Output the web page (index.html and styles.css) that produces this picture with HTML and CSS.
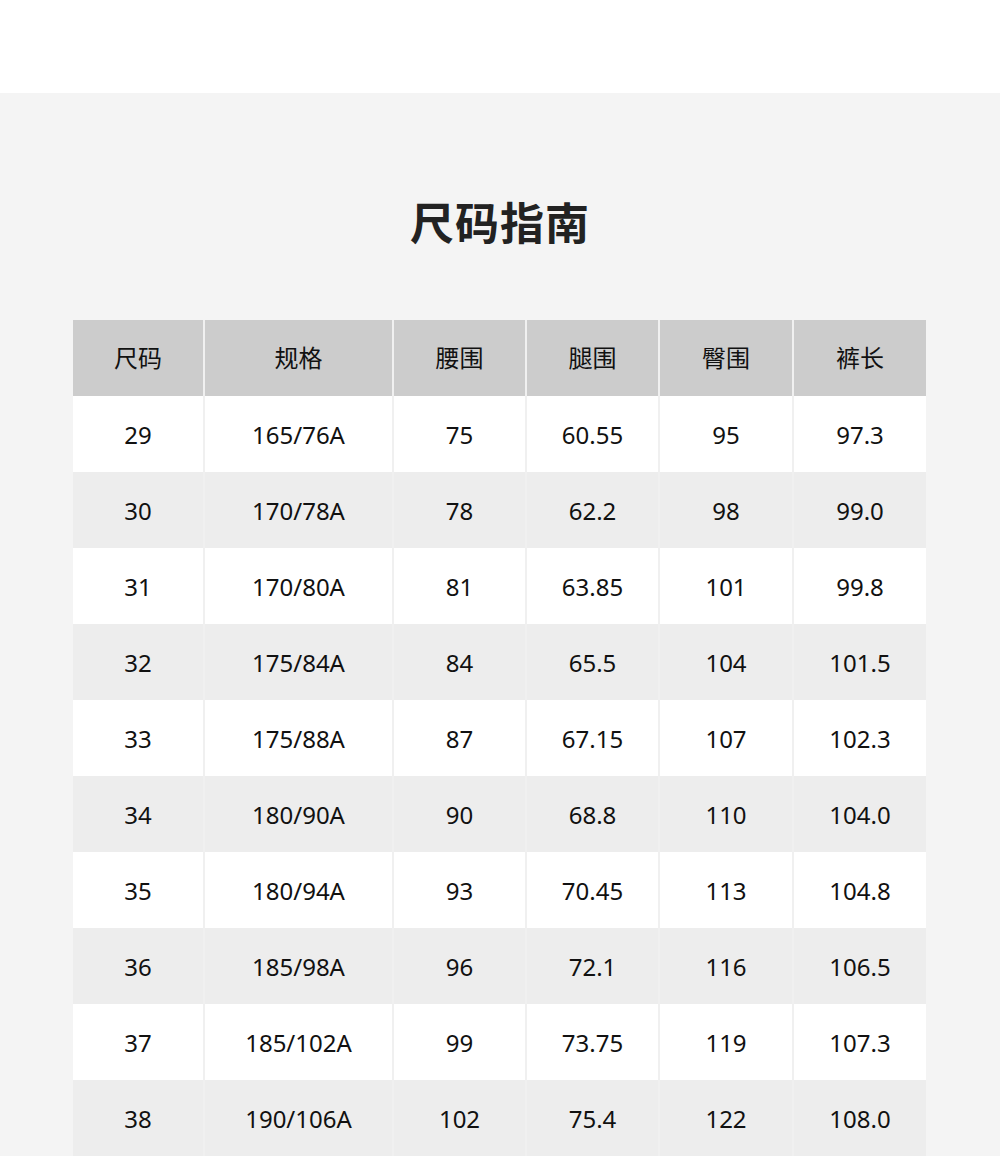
FILE: index.html
```html
<!DOCTYPE html>
<html lang="zh">
<head>
<meta charset="utf-8">
<link rel="stylesheet" href="styles.css">
</head>
<body>
<div class="topband"></div>
<section class="guide">
  <h1 class="title">尺码指南</h1>
  <div class="size-table">
    <div class="cell head">尺码</div><div class="cell head">规格</div><div class="cell head">腰围</div><div class="cell head">腿围</div><div class="cell head">臀围</div><div class="cell head">裤长</div>
    <div class="cell">29</div><div class="cell">165/76A</div><div class="cell">75</div><div class="cell">60.55</div><div class="cell">95</div><div class="cell">97.3</div>
    <div class="cell alt">30</div><div class="cell alt">170/78A</div><div class="cell alt">78</div><div class="cell alt">62.2</div><div class="cell alt">98</div><div class="cell alt">99.0</div>
    <div class="cell">31</div><div class="cell">170/80A</div><div class="cell">81</div><div class="cell">63.85</div><div class="cell">101</div><div class="cell">99.8</div>
    <div class="cell alt">32</div><div class="cell alt">175/84A</div><div class="cell alt">84</div><div class="cell alt">65.5</div><div class="cell alt">104</div><div class="cell alt">101.5</div>
    <div class="cell">33</div><div class="cell">175/88A</div><div class="cell">87</div><div class="cell">67.15</div><div class="cell">107</div><div class="cell">102.3</div>
    <div class="cell alt">34</div><div class="cell alt">180/90A</div><div class="cell alt">90</div><div class="cell alt">68.8</div><div class="cell alt">110</div><div class="cell alt">104.0</div>
    <div class="cell">35</div><div class="cell">180/94A</div><div class="cell">93</div><div class="cell">70.45</div><div class="cell">113</div><div class="cell">104.8</div>
    <div class="cell alt">36</div><div class="cell alt">185/98A</div><div class="cell alt">96</div><div class="cell alt">72.1</div><div class="cell alt">116</div><div class="cell alt">106.5</div>
    <div class="cell">37</div><div class="cell">185/102A</div><div class="cell">99</div><div class="cell">73.75</div><div class="cell">119</div><div class="cell">107.3</div>
    <div class="cell alt">38</div><div class="cell alt">190/106A</div><div class="cell alt">102</div><div class="cell alt">75.4</div><div class="cell alt">122</div><div class="cell alt">108.0</div>
  </div>
</section>
</body>
</html>
```
FILE: styles.css
```css
html, body {
  margin: 0;
  padding: 0;
}
body {
  background: #f4f4f4;
  font-family: "Noto Sans", "Noto Sans CJK SC", sans-serif;
  color: #111;
}
.topband {
  height: 93px;
  background: #ffffff;
}
.guide {
  background: #f4f4f4;
  padding: 98px 0 40px;
}
.title {
  margin: 0;
  height: 60px;
  line-height: 60px;
  text-align: center;
  font-family: "Noto Sans CJK SC", sans-serif;
  font-weight: 700;
  font-size: 44px;
  letter-spacing: 1px;
  color: #222;
}
.size-table {
  margin: 69px 0 0 73px;
  width: 853px;
  display: grid;
  grid-template-columns: 130px 187px 131px 131px 132px 132px;
  column-gap: 2px;
  background: #f0f0f0;
}
.cell {
  height: 76px;
  display: flex;
  align-items: center;
  justify-content: center;
  background: #ffffff;
  font-size: 24px;
  color: #111;
}
.cell.alt {
  background: #ededed;
}
.cell.head {
  background: #cccccc;
  font-family: "Noto Sans CJK SC", sans-serif;
  font-size: 24px;
  font-weight: 400;
  padding-bottom: 4px;
  box-sizing: border-box;
}
```
